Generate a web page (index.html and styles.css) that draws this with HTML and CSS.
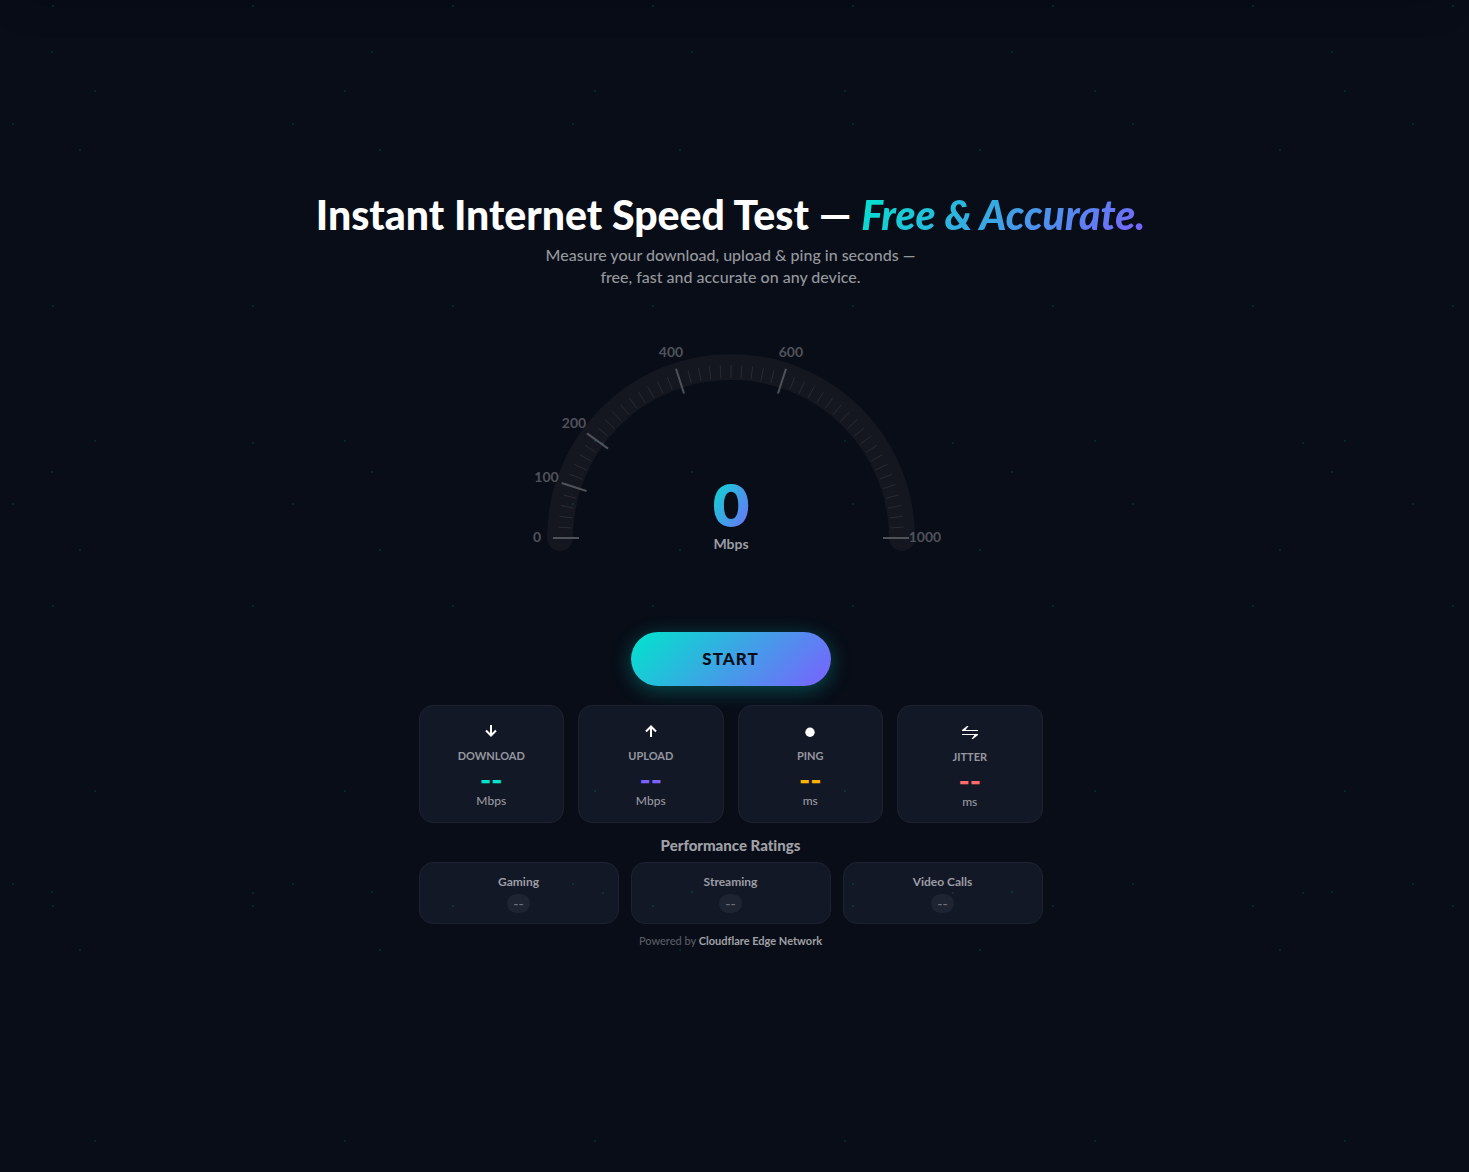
FILE: index.html
```html
<!DOCTYPE html>
<html lang="en">
<head>
    <meta charset="UTF-8">
    <meta name="viewport" content="width=device-width, initial-scale=1.0">
    <title>Instant Internet Speed Test</title>
    <link rel="stylesheet" href="styles.css">
</head>
<body>
    <main class="speedtest">
        <header class="hero">
            <h1>Instant Internet Speed Test — <em>Free &amp; Accurate.</em></h1>
            <p>Measure your download, upload &amp; ping in seconds —<br>free, fast and accurate on any device.</p>
        </header>

        <div class="gauge">
            <svg id="gauge" viewBox="0 0 420 260" role="img" aria-label="Speed gauge">
                <defs>
                    <linearGradient id="accent" x1="0" y1="0" x2="1" y2="1">
                        <stop offset="0" stop-color="#00e5cc"/>
                        <stop offset="1" stop-color="#7b61ff"/>
                    </linearGradient>
                </defs>
                <path class="gauge-track" d="M39 208 A171 171 0 0 1 381 208"/>
                <g id="ticks"></g>
                <text class="gauge-value" x="210" y="196" fill="url(#accent)">0</text>
                <text class="gauge-unit" x="210" y="219">Mbps</text>
            </svg>
        </div>

        <button class="start-btn" type="button">START</button>

        <section class="stats">
            <div class="card stat">
                <svg class="icon" viewBox="0 0 16 16"><path d="M8 2v11M3 7.500 8 12.500 13 7.500"/></svg>
                <h2>DOWNLOAD</h2>
                <div class="value download">--</div>
                <div class="unit">Mbps</div>
            </div>
            <div class="card stat">
                <svg class="icon" viewBox="0 0 16 16"><path d="M8 14V3M3 8.500 8 3.500 13 8.500"/></svg>
                <h2>UPLOAD</h2>
                <div class="value upload">--</div>
                <div class="unit">Mbps</div>
            </div>
            <div class="card stat">
                <svg class="icon" viewBox="0 0 16 16"><circle cx="8" cy="9.300" r="4.700"/></svg>
                <h2>PING</h2>
                <div class="value ping">--</div>
                <div class="unit">ms</div>
            </div>
            <div class="card stat">
                <svg class="icon tall" viewBox="0 0 16 17"><path d="M16 8H0V7L5 3H6.500L3.500 7H16ZM0 11H16V12L11 16H9.500L12.500 12H0Z"/></svg>
                <h2>JITTER</h2>
                <div class="value jitter">--</div>
                <div class="unit">ms</div>
            </div>
        </section>

        <section class="ratings">
            <h2>Performance Ratings</h2>
            <div class="ratings-grid">
                <div class="card rating"><h3>Gaming</h3><span class="badge">--</span></div>
                <div class="card rating"><h3>Streaming</h3><span class="badge">--</span></div>
                <div class="card rating"><h3>Video Calls</h3><span class="badge">--</span></div>
            </div>
        </section>

        <footer class="powered">Powered by <strong>Cloudflare Edge Network</strong></footer>
    </main>

    <script src="gauge.js"></script>
</body>
</html>
```
FILE: styles.css
```css
* {
    box-sizing: border-box;
    margin: 0;
    padding: 0;
}

body {
    min-height: 100vh;
    padding: 0 8px 35px 0;
    display: flex;
    flex-direction: column;
    justify-content: center;
    background-color: #080d18;
    color: #fff;
    font-family: Lato, sans-serif;
    font-weight: 500;
    font-variant-ligatures: none;
}

/* soft shade along the top edge */
body::before {
    content: "";
    position: fixed;
    top: -40px;
    left: 16px;
    right: 24px;
    height: 40px;
    box-shadow: 0 8px 32px rgba(0, 0, 0, 0.15);
}

/* faint star field over the whole page */
body::after {
    content: "";
    position: fixed;
    inset: 0;
    pointer-events: none;
    opacity: 0.4;
    background-image:
        radial-gradient(1px 1px at 53px 6px, #00e5cc, transparent),
        radial-gradient(1px 1px at 52px 52px, #00e5cc, transparent),
        radial-gradient(1px 1px at 95px 91px, #00e5cc, transparent),
        radial-gradient(1px 1px at 13px 124px, #00e5cc, transparent),
        radial-gradient(1px 1px at 80px 150px, #00e5cc, transparent),
        radial-gradient(1px 1px at 253px 443px, #00e5cc, transparent);
    background-size: 200px 300px, 320px 420px, 250px 350px, 280px 380px, 300px 400px, 350px 450px;
}

.speedtest {
    display: flex;
    flex-direction: column;
    align-items: center;
    padding: 0 16px;
}

.hero {
    text-align: center;
    margin-bottom: 42px;
}

.hero h1 {
    font-size: 41px;
    line-height: 50px;
    font-weight: 900;
}

.hero em {
    background: linear-gradient(135deg, #00e5cc, #7b61ff);
    -webkit-background-clip: text;
    background-clip: text;
    color: transparent;
}

.hero p {
    margin-top: 4px;
    font-size: 16px;
    line-height: 22px;
    color: #95979c;
}

.gauge {
    width: 100%;
    max-width: 420px;
    margin-bottom: 42px;
}

.gauge svg {
    display: block;
    width: 100%;
}

.gauge-track {
    fill: none;
    stroke: #141620;
    stroke-width: 26;
    stroke-linecap: round;
}

.tick {
    stroke: #292b34;
    stroke-width: 1;
}

.tick.major {
    stroke: #50525a;
    stroke-width: 2;
}

.gauge text {
    text-anchor: middle;
}

.gauge-label {
    font-size: 14px;
    font-weight: 700;
    fill: #50525b;
}

.gauge-value {
    font-family: Inter, sans-serif;
    font-size: 56px;
    font-weight: 800;
}

.gauge-unit {
    font-size: 14px;
    font-weight: 700;
    fill: #9c9da2;
}

.start-btn {
    width: 200px;
    height: 54px;
    border: none;
    border-radius: 27px;
    background: linear-gradient(135deg, #00e5cc, #7b61ff);
    box-shadow: 0 4px 20px rgba(0, 229, 204, 0.3);
    color: #080d18;
    font: 900 17px Lato, sans-serif;
    letter-spacing: 1px;
    cursor: pointer;
}

.stats {
    display: grid;
    grid-template-columns: repeat(4, 1fr);
    gap: 14px;
    width: 100%;
    max-width: 624px;
    margin-top: 19px;
}

.card {
    display: flex;
    flex-direction: column;
    align-items: center;
    background: #131827;
    border: 1px solid #1e2230;
    border-radius: 14px;
}

.stat {
    padding: 17px 12px 13px;
}

.icon {
    width: 16px;
    height: 16px;
    fill: none;
    stroke: #fff;
    stroke-width: 2;
}

.icon circle {
    fill: #fff;
    stroke: none;
}

.icon.tall {
    height: 17px;
    fill: #fff;
    stroke: none;
}

.stat h2 {
    margin-top: 10px;
    font-size: 11px;
    line-height: 14px;
    font-weight: 700;
    color: #95979f;
}

.value {
    margin-top: 4px;
    font-family: Inter, sans-serif;
    font-size: 24px;
    line-height: 27px;
    font-weight: 800;
}

.download { color: #00e5cc; }
.upload { color: #7b61ff; }
.ping { color: #ffb300; }
.jitter { color: #ff6b6b; }

.unit {
    font-size: 12px;
    line-height: 14px;
    color: #95979f;
}

.ratings {
    width: 100%;
    max-width: 624px;
    margin-top: 13px;
    text-align: center;
}

.ratings > h2 {
    font-size: 15px;
    line-height: 18px;
    font-weight: 900;
    color: #a0a1a6;
}

.ratings-grid {
    display: grid;
    grid-template-columns: repeat(3, 1fr);
    gap: 12px;
    margin-top: 8px;
}

.rating {
    padding: 11px 10px 10px;
}

.rating h3 {
    font-size: 12px;
    line-height: 16px;
    color: #9c9da4;
}

.badge {
    margin-top: 4px;
    padding: 0 6px;
    border-radius: 10px;
    background: #1f2433;
    font-size: 14px;
    line-height: 19px;
    color: #6f727c;
}

.powered {
    margin-top: 10px;
    font-size: 11px;
    line-height: 14px;
    color: #5a5d66;
}

.powered strong {
    color: #a0a1a6;
}
```
FILE: gauge.js
```javascript
const SVG_NS = 'http://www.w3.org/2000/svg';
const ticks = document.getElementById('ticks');
const cx = 210;
const cy = 208;

// tick index -> label, the scale has 50 steps
const labels = { 0: '0', 5: '100', 10: '200', 20: '400', 30: '600', 50: '1000' };

function point(angle, r) {
    return [cx - r * Math.cos(angle), cy - r * Math.sin(angle)];
}

for (let i = 0; i <= 50; i++) {
    const angle = Math.PI * i / 50;
    const major = i in labels;
    const [x1, y1] = point(angle, major ? 178 : 173);
    const [x2, y2] = point(angle, major ? 152 : 160);

    const line = document.createElementNS(SVG_NS, 'line');
    line.setAttribute('class', major ? 'tick major' : 'tick');
    line.setAttribute('x1', x1);
    line.setAttribute('y1', y1);
    line.setAttribute('x2', x2);
    line.setAttribute('y2', y2);
    ticks.appendChild(line);

    if (major) {
        const [x, y] = point(angle, 194);
        const text = document.createElementNS(SVG_NS, 'text');
        text.setAttribute('class', 'gauge-label');
        text.setAttribute('x', x);
        text.setAttribute('y', y + 4);
        text.textContent = labels[i];
        ticks.appendChild(text);
    }
}
```
